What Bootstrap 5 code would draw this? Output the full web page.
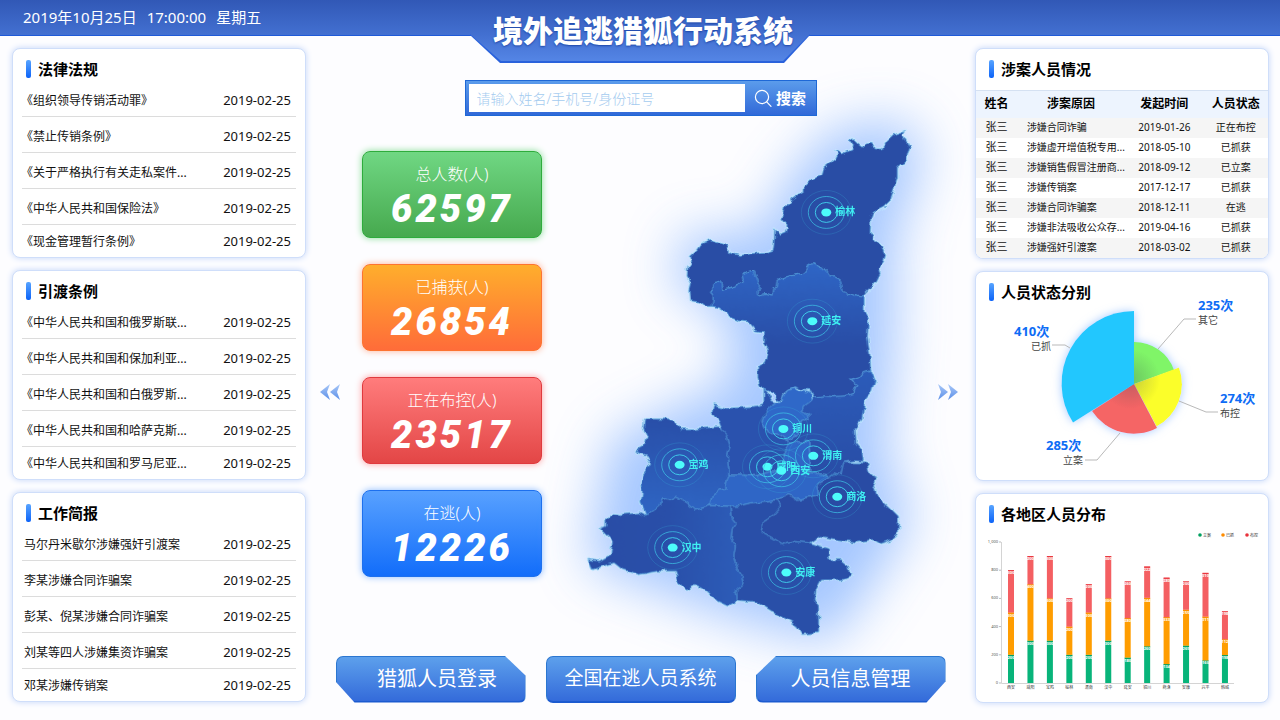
<!DOCTYPE html>
<html lang="zh-CN">
<head>
<meta charset="utf-8">
<meta name="viewport" content="width=device-width, initial-scale=1">
<title>境外追逃猎狐行动系统</title>
<link href="https://cdn.jsdelivr.net/npm/bootstrap@5.3.0/dist/css/bootstrap.min.css" rel="stylesheet">
<style>
  body { font-family: "Noto Sans", "Noto Sans CJK SC", sans-serif; font-size: 12px; color: #111; background: #fdfdff; min-height: 100vh; }
  svg text { font-family: "Noto Sans", "Noto Sans CJK SC", sans-serif; }

  /* top bar and its title tab share one 62px gradient */
  .topbar { height: 36px; z-index: 2; background: linear-gradient(#3158b6, #4370d1 35px) no-repeat; border-bottom: 1px solid #1f5ad8; font-size: 15px; color: #fff; }
  .clock { gap: 10px; margin-left: -1px; }
  .title-tab { width: 340px; height: 63px; padding: 9px 0 0 6px; background: #2a62dc; clip-path: polygon(0 0, 100% 0, 100% 35px, 314px 100%, 30px 100%, 0 35px); }
  .title-tab::before { content: ""; position: absolute; inset: 0 0 2px; z-index: -1; background: linear-gradient(#3158b6, #4370d1 35px, #5485e5); clip-path: polygon(0 0, 100% 0, 100% 34px, 313px 100%, 31px 100%, 0 34px); }
  .title-tab h1 { font-size: 30px; line-height: 44px; font-weight: 900; color: #fff; white-space: nowrap; text-shadow: 0 1px 2px #1c46a8; }

  .board { display: grid; grid-template-columns: 294px minmax(0, 1fr) 294px; padding: 12px 11px 16px 12px; }
  .side { display: flex; flex-direction: column; gap: 12px; }
  .panel { min-height: 210px; background: #fff; border: 1px solid #cfdefa; border-radius: 8px; box-shadow: 0 0 6px #c3d5f8; overflow: hidden; }
  .panel-title { display: flex; align-items: center; gap: 7px; height: 24px; margin: 8px 0 0 13px; font-size: 15px; font-weight: 700; color: #000; }
  .panel-title::before { content: ""; width: 5px; height: 18px; border-radius: 2px; background: linear-gradient(#58a4ff, #0c63f8); }

  .notices { margin: 0 9px; }
  .notices li { display: flex; justify-content: space-between; align-items: center; height: 36px; padding: 5px 5px 0 2px; border-bottom: 1px solid #dcdcdc; }
  .notices li:last-child { height: 32px; padding-top: 1px; border-bottom: 0; }
  .notices a { color: #111; text-decoration: none; }
  .notices .lawname { text-indent: -3px; }
  .notices time { font-size: 13px; }

  .cases { width: 100%; table-layout: fixed; margin-top: 9px; font-size: 10px; white-space: nowrap; }
  .cases th { height: 27px; padding: 0; background: #edf4fe; border-top: 1px solid #d5e1f2; font-size: 12px; line-height: 18px; text-align: center; color: #000; }
  .cases td { height: 20px; line-height: 18px; padding: 0 0 2px; text-align: center; }
  .cases td:first-child { font-size: 11px; }
  .cases td:nth-child(2) { text-align: left; padding-left: 10px; }
  .cases tbody tr:nth-child(odd) { background: #f5f5f5; }

  .search { width: 352px; height: 36px; margin-top: 32px; padding: 3px 0 3px 3px; z-index: 1; background: linear-gradient(#5b9ceb, #3169d8); border: 1px solid #1e68d6; }
  .search input { border: 0; border-radius: 0; background: #fff; font-size: 14px; font-weight: 300; padding: 0 8px; height: 28px; }
  .search input::placeholder { color: #a4cbef; opacity: 1; }
  .search button { width: 71px; flex: none; border: 0; background: none; color: #fff; font-size: 15px; font-weight: 700; white-space: nowrap; padding: 0; }

  .stage { padding: 0 16px 0 13px; }
  .pager { width: 22px; padding: 0; border: 0; background: none; margin-top: 12px; }
  .tallies { width: 180px; margin: 35px 0 0 21px; gap: 26px; }
  .tally { height: 87px; padding-top: 11px; border-radius: 8px; border: 1px solid; color: #fff; text-align: center; }
  .tally span { display: block; font-size: 16px; line-height: 22px; font-weight: 300; }
  .tally strong { display: block; font: italic 900 38px/48px Roboto, sans-serif; letter-spacing: 3px; }
  .tally-all { background: linear-gradient(#70d783, #46a94e); border-color: #2eac3c; box-shadow: 0 0 7px #83dc92; }
  .tally-caught { background: linear-gradient(#ffae2c, #ff6c39); border-color: #fd7431; box-shadow: 0 0 7px #ffb295; }
  .tally-watch { background: linear-gradient(#ff7c7c, #e34646); border-color: #e03a3e; box-shadow: 0 0 7px #ff9e9e; }
  .tally-free { background: linear-gradient(#58a1ff, #126dfa); border-color: #1d70ee; box-shadow: 0 0 7px #8dbcff; }
  .region-map { flex: 1 1 0; min-width: 0; height: 539px; overflow: visible; }

  .entries { gap: 20px; z-index: 1; }
  .entry { width: 190px; height: 47px; border: 1px solid #2b76d0; border-bottom: 2px solid #1c5bd0; border-radius: 7px; background: linear-gradient(#5da0ec, #346bda); color: #fff; font-size: 20px; padding: 0; white-space: nowrap; }
  .entry-left { clip-path: polygon(0 0, 169px 0, 100% 20px, 100% 100%, 19px 100%, 0 26px); padding-left: 13px; }
  .entry-mid { font-size: 19px; }
  .entry-right { clip-path: polygon(21px 0, 100% 0, 100% 26px, 171px 100%, 0 100%, 0 20px); }
</style>
</head>
<body>
<header class="topbar position-relative d-flex align-items-center px-4">
  <time class="clock d-flex"><span>2019年10月25日</span><span>17:00:00</span><span>星期五</span></time>
  <div class="title-tab position-absolute top-0 start-50 translate-middle-x text-center"><h1 class="m-0">境外追逃猎狐行动系统</h1></div>
</header>

<main class="board">
  <aside class="side">
    <section class="panel">
      <h2 class="panel-title">法律法规</h2>
      <ul class="notices list-unstyled">
        <li><a class="lawname" href="#">《组织领导传销活动罪》</a><time>2019-02-25</time></li>
        <li><a class="lawname" href="#">《禁止传销条例》</a><time>2019-02-25</time></li>
        <li><a class="lawname" href="#">《关于严格执行有关走私案件...</a><time>2019-02-25</time></li>
        <li><a class="lawname" href="#">《中华人民共和国保险法》</a><time>2019-02-25</time></li>
        <li><a class="lawname" href="#">《现金管理暂行条例》</a><time>2019-02-25</time></li>
      </ul>
    </section>
    <section class="panel">
      <h2 class="panel-title">引渡条例</h2>
      <ul class="notices list-unstyled">
        <li><a class="lawname" href="#">《中华人民共和国和俄罗斯联...</a><time>2019-02-25</time></li>
        <li><a class="lawname" href="#">《中华人民共和国和保加利亚...</a><time>2019-02-25</time></li>
        <li><a class="lawname" href="#">《中华人民共和国和白俄罗斯...</a><time>2019-02-25</time></li>
        <li><a class="lawname" href="#">《中华人民共和国和哈萨克斯...</a><time>2019-02-25</time></li>
        <li><a class="lawname" href="#">《中华人民共和国和罗马尼亚...</a><time>2019-02-25</time></li>
      </ul>
    </section>
    <section class="panel">
      <h2 class="panel-title">工作简报</h2>
      <ul class="notices list-unstyled">
        <li><a href="#">马尔丹米歇尔涉嫌强奸引渡案</a><time>2019-02-25</time></li>
        <li><a href="#">李某涉嫌合同诈骗案</a><time>2019-02-25</time></li>
        <li><a href="#">彭某、倪某涉嫌合同诈骗案</a><time>2019-02-25</time></li>
        <li><a href="#">刘某等四人涉嫌集资诈骗案</a><time>2019-02-25</time></li>
        <li><a href="#">邓某涉嫌传销案</a><time>2019-02-25</time></li>
      </ul>
    </section>
  </aside>

  <div class="d-flex flex-column align-items-center">
    <form class="search d-flex position-relative" role="search" onsubmit="return false">
      <input class="form-control" type="text" aria-label="搜索人员" placeholder="请输入姓名/手机号/身份证号">
      <button type="submit" class="d-flex align-items-center justify-content-center gap-1">
        <svg width="18" height="18" viewBox="0 0 18 18" fill="none" stroke="#fff" stroke-width="1.2" stroke-linecap="round"><circle cx="8" cy="8" r="6.6"/><path d="M12.7 12.9 17 17.3"/></svg>搜索
      </button>
    </form>

    <div class="stage d-flex w-100 flex-grow-1">
      <button class="pager align-self-center" type="button" aria-label="上一页">
        <svg width="22" height="18" viewBox="0 0 22 18"><defs><linearGradient id="arrowFill" x2="0" y2="1"><stop stop-color="#a9c8f8"/><stop offset="1" stop-color="#5b8fe8"/></linearGradient></defs><path fill="url(#arrowFill)" d="M11 1 1 9l10 8-3-8zM21 1 11 9l10 8-3-8z"/></svg>
      </button>
      <div class="tallies d-flex flex-column flex-shrink-0">
        <div class="tally tally-all"><span>总人数(人)</span><strong>62597</strong></div>
        <div class="tally tally-caught"><span>已捕获(人)</span><strong>26854</strong></div>
        <div class="tally tally-watch"><span>正在布控(人)</span><strong>23517</strong></div>
        <div class="tally tally-free"><span>在逃(人)</span><strong>12226</strong></div>
      </div>
      <svg class="region-map" viewBox="541 116 396 539" role="img" aria-label="陕西省地图">
        <defs>
          <filter id="halo" x="-50%" y="-30%" width="200%" height="160%"><feGaussianBlur stdDeviation="26"/></filter>
          <filter id="coast" x="-5%" y="-5%" width="110%" height="110%" color-interpolation-filters="sRGB">
            <feTurbulence type="fractalNoise" baseFrequency=".16" numOctaves="1" seed="4" result="n"/>
            <feDisplacementMap in="SourceGraphic" in2="n" scale="7" xChannelSelector="R" yChannelSelector="G"/>
          </filter>
          <linearGradient id="yanan" x2="0" y2="1"><stop stop-color="#2f66c6"/><stop offset=".6" stop-color="#294da6"/></linearGradient>
          <linearGradient id="baoji" x2="0" y2="1"><stop stop-color="#294fa9"/><stop offset="1" stop-color="#2f66c4"/></linearGradient>
          <linearGradient id="hanzhong"><stop stop-color="#294da6"/><stop offset=".5" stop-color="#294fa9"/><stop offset="1" stop-color="#2d5db9"/></linearGradient>
          <linearGradient id="weinan" x2="0" y2="1"><stop stop-color="#2c5cba"/><stop offset="1" stop-color="#294da6"/></linearGradient>
          <g id="shapes" transform="translate(570 360) scale(.3333)">
            <g transform="translate(270 -750)">
              <polygon fill="#294da5" points="735,60 728,72 738,90 750,112 742,130 740,152 725,160 712,172 712,200 700,240 692,268 670,290 640,305 632,325 630,368 650,395 668,415 676,435 668,460 655,475 660,490 650,510 630,535 612,555 600,560 578,553 560,558 548,540 540,508 528,500 508,500 500,480 480,470 458,460 440,472 430,488 400,495 380,498 350,510 348,530 338,535 335,555 315,550 292,555 290,545 297,530 292,510 280,480 262,483 245,492 248,510 225,527 205,533 185,537 180,515 168,512 160,520 160,540 150,545 158,560 155,588 135,588 120,575 88,572 85,540 90,520 80,500 82,465 92,450 90,438 110,420 125,400 150,390 180,400 200,405 208,428 240,435 290,428 320,425 338,420 342,385 343,355 358,375 378,368 382,345 365,325 375,290 395,265 432,240 430,228 455,205 485,195 492,170 525,145 532,132 525,120 545,130 575,118 580,105 567,85 580,88 605,110 618,100 635,98 645,115 665,115 680,90 700,72"/>
              <polygon fill="url(#yanan)" points="612,555 600,560 578,553 560,558 548,540 540,508 528,500 508,500 500,480 480,470 458,460 440,472 430,488 400,495 380,498 350,510 348,530 338,535 335,555 315,550 292,555 290,545 297,530 292,510 280,480 262,483 245,492 248,510 225,527 205,533 185,537 180,515 168,512 160,520 160,540 150,545 158,560 155,588 175,592 195,605 205,620 235,632 262,635 285,662 312,665 312,700 325,720 315,760 292,770 292,800 298,825 310,838 340,848 350,868 362,870 370,850 385,838 405,830 430,840 452,842 460,862 490,858 520,860 555,858 580,850 590,825 570,808 600,800 612,785 632,780 630,740 622,680 625,625 612,600"/>
            </g>
            <polygon fill="url(#weinan)" points="902,30 915,60 905,95 885,120 875,180 855,205 858,250 875,270 880,305 850,303 820,308 812,345 790,340 775,355 770,345 715,338 718,280 715,245 655,250 650,240 680,225 690,185 715,175 715,165 692,155 700,140 725,120 730,112 760,108 790,110 825,108 850,100 860,75 840,58 870,50 882,35"/>
            <polygon fill="#2a52ae" points="580,88 580,130 560,138 520,142 470,145 430,135 425,155 445,185 455,210 470,225 478,260 470,290 475,325 475,345 560,348 600,335 637,345 640,275 655,250 650,240 630,225 605,220 585,210 575,185 585,155 600,140 620,128 605,123 590,95"/>
            <polygon fill="#2f68c8" points="620,128 632,120 640,105 655,88 675,82 690,92 722,98 725,120 700,140 692,155 715,165 715,175 690,185 680,225 650,240 630,225 605,220 585,210 575,185 585,155 600,140"/>
            <polygon fill="#2f66c6" points="475,345 560,348 600,335 637,345 640,275 655,250 715,245 718,280 715,338 770,345 775,355 740,375 745,405 715,412 680,420 655,405 620,420 580,425 540,430 500,440 482,440 418,438 425,405 445,388 465,385 470,360"/>
            <polygon fill="url(#baoji)" points="445,200 400,205 370,210 335,210 310,185 285,178 250,178 222,178 218,205 230,230 222,255 195,270 200,280 225,285 240,310 218,345 210,370 215,400 210,425 220,450 225,470 240,460 270,435 275,415 300,422 320,410 350,430 375,452 418,438 425,405 445,388 465,385 470,360 475,345 475,325 470,290 478,260 470,225 455,210"/>
            <polygon fill="url(#hanzhong)" points="225,470 205,460 180,462 150,465 125,462 105,480 105,500 88,508 110,530 125,545 120,585 85,605 52,600 65,630 95,620 130,610 155,630 205,645 260,635 315,635 325,670 345,690 370,675 410,695 440,725 472,740 500,725 498,690 518,675 515,650 500,625 490,590 495,560 482,540 485,510 497,490 485,475 482,440 418,438 375,452 350,430 320,410 300,422 275,415 270,435 240,460"/>
            <polygon fill="#294fa8" points="482,440 500,440 540,430 580,425 620,420 632,440 605,470 580,485 572,515 600,530 635,552 665,545 720,550 775,568 775,600 810,600 835,620 845,650 820,660 750,662 735,690 732,715 745,740 745,820 695,825 680,800 620,765 560,728 500,722 498,690 518,675 515,650 500,625 490,590 495,560 482,540 485,510 497,490 485,475"/>
            <polygon fill="#294ba4" points="620,420 655,405 680,420 715,412 745,405 740,375 775,355 790,340 812,345 820,308 890,310 900,345 918,355 910,380 922,410 960,445 985,470 985,520 965,540 930,552 910,540 860,548 800,540 750,530 720,550 665,545 635,552 600,530 572,515 580,485 605,470 632,440"/>
          </g>
        </defs>
        <path filter="url(#halo)" fill="#8cb8ff" opacity=".78" d="M900 118 925 150 895 240 895 340 885 450 912 520 895 550 862 600 828 645 720 615 640 585 585 565 610 440 690 400 735 380 725 310 675 290 680 235 765 230 780 190 830 130Z"/>
        <g filter="url(#coast)">
          <use href="#shapes" stroke="#c5ecff" stroke-width="8" stroke-linejoin="round"/>
          <use href="#shapes" stroke="#4f9ad8" stroke-width="2.5" stroke-linejoin="round"/>
        </g>
        <g id="pins" fill="none" stroke="#3fc9e8"></g>
      </svg>
      <button class="pager align-self-center" type="button" aria-label="下一页">
        <svg width="22" height="18" viewBox="0 0 22 18"><path fill="url(#arrowFill)" d="M1 1l10 8L1 17l3-8zM11 1l10 8-10 8 3-8z"/></svg>
      </button>
    </div>

    <div class="entries d-flex position-relative">
      <button class="entry entry-left" type="button">猎狐人员登录</button>
      <button class="entry entry-mid" type="button">全国在逃人员系统</button>
      <button class="entry entry-right" type="button">人员信息管理</button>
    </div>
  </div>

  <aside class="side">
    <section class="panel">
      <h2 class="panel-title">涉案人员情况</h2>
      <table class="cases">
        <colgroup><col style="width:14%"><col style="width:37%"><col style="width:27%"><col style="width:22%"></colgroup>
        <thead><tr><th>姓名</th><th>涉案原因</th><th>发起时间</th><th>人员状态</th></tr></thead>
        <tbody>
          <tr><td>张三</td><td>涉嫌合同诈骗</td><td>2019-01-26</td><td>正在布控</td></tr>
          <tr><td>张三</td><td>涉嫌虚开增值税专用...</td><td>2018-05-10</td><td>已抓获</td></tr>
          <tr><td>张三</td><td>涉嫌销售假冒注册商...</td><td>2018-09-12</td><td>已立案</td></tr>
          <tr><td>张三</td><td>涉嫌传销案</td><td>2017-12-17</td><td>已抓获</td></tr>
          <tr><td>张三</td><td>涉嫌合同诈骗案</td><td>2018-12-11</td><td>在逃</td></tr>
          <tr><td>张三</td><td>涉嫌非法吸收公众存...</td><td>2019-04-16</td><td>已抓获</td></tr>
          <tr><td>张三</td><td>涉嫌强奸引渡案</td><td>2018-03-02</td><td>已抓获</td></tr>
        </tbody>
      </table>
    </section>
    <section class="panel position-relative">
      <h2 class="panel-title mb-0">人员状态分别</h2>
      <svg class="d-block w-100 overflow-visible" viewBox="976 303 292 176" role="img" aria-label="人员状态分别">
        <defs>
          <filter id="pieGlow" x="-30%" y="-30%" width="160%" height="160%"><feDropShadow dx="0" dy="0" stdDeviation="5" flood-color="#7fb2ff" flood-opacity=".7"/></filter>
          <radialGradient id="pieShade" gradientUnits="userSpaceOnUse" cx="1130" cy="378" r="30"><stop stop-color="#345" stop-opacity=".28"/><stop offset="1" stop-color="#345" stop-opacity="0"/></radialGradient>
        </defs>
        <g filter="url(#pieGlow)">
          <path fill="#80f567" d="M1134 383V341A42 42 0 0 1 1174 369Z"/>
          <path fill="#fbfe2a" d="M1134 383 1179 366.500A48 48 0 0 1 1156.500 425.500Z"/>
          <path fill="#f56565" d="M1134 383 1157 427A50 50 0 0 1 1092 410Z"/>
          <circle cx="1134" cy="383" r="40" fill="url(#pieShade)"/>
          <path fill="#20c7fe" d="M1134 383 1073 421.500A72.500 72.500 0 0 1 1134 310Z"/>
        </g>
        <g fill="none" stroke="#b9b9b9"><path d="M1158 348 1184 318H1196"/><path d="M1052 344H1065L1070 347"/><path d="M1179 400 1206 411H1218"/><path d="M1120 432 1097 459H1085"/></g>
        <g font-size="13" font-weight="700" fill="#0d6cf5"><text x="1198" y="309">235次</text><text x="1014" y="335">410次</text><text x="1220" y="402">274次</text><text x="1046" y="449">285次</text></g>
        <g font-size="10" fill="#444"><text x="1198" y="323">其它</text><text x="1031" y="349">已抓</text><text x="1220" y="416">布控</text><text x="1063" y="463">立案</text></g>
      </svg>
    </section>
    <section class="panel">
      <h2 class="panel-title mb-0">各地区人员分布</h2>
      <svg id="bars" class="d-block w-100" viewBox="976 525 292 176" role="img" aria-label="各地区人员分布"></svg>
    </section>
  </aside>
</main>

<script src="https://cdn.jsdelivr.net/npm/bootstrap@5.3.0/dist/js/bootstrap.bundle.min.js"></script>
<script>
  const cities = [['榆林',826,212],['延安',812,321],['铜川',783,429],['渭南',813,456],['咸阳',767,467],['西安',781,471],['宝鸡',679,465],['商洛',837,497],['汉中',672,548],['安康',786,573]];
  document.getElementById('pins').innerHTML = cities.map(([name, x, y]) =>
    `<ellipse cx="${x}" cy="${y}" rx="11" ry="10"/><ellipse cx="${x}" cy="${y}" rx="18" ry="16" opacity=".7"/><ellipse cx="${x}" cy="${y}" rx="25" ry="22" opacity=".2"/>
     <ellipse cx="${x}" cy="${y}" rx="5" ry="4" fill="#4dfcfb" stroke="none"/><text x="${x + 9}" y="${y + 3}" font-size="10" font-weight="700" fill="#3ff0f2" stroke="none">${name}</text>`).join('');

  // per city: filed, caught, under watch
  const data = [['西安',200,300,300],['咸阳',300,400,200],['宝鸡',300,300,300],['榆林',200,200,200],['渭南',200,300,200],['汉中',300,300,300],['延安',180,280,260],['铜川',260,344,222],['商洛',134,333,280],['安康',265,255,200],['兴平',160,311,310],['韩城',198,112,198]];
  const colors = ['#08b47a', '#ff9d00', '#f45f62'], tops = ['#00a060', '#ff8c00', '#e8323c'];
  const base = 682, unit = 0.141;
  let out = '<path d="M1001.500 541V682.500H1234" fill="none" stroke="#d4d4d4"/>';
  for (let v = 0; v <= 1000; v += 200)
    out += `<path d="M999 ${base - v * unit}h2" stroke="#bbb"/><text x="998" y="${base - v * unit + 1}" font-size="4" text-anchor="end" fill="#555">${v.toLocaleString('en')}</text>`;
  data.forEach(([name, ...parts], i) => {
    const x = 1008 + i * 19.45; let y = base;
    parts.forEach((n, k) => {
      const h = n * unit; y -= h;
      out += `<rect x="${x}" y="${y}" width="6" height="${h}" fill="${colors[k]}"/><rect x="${x}" y="${y}" width="6" height="1" fill="${tops[k]}"/><text x="${x + 3}" y="${y + 4}" font-size="4" font-weight="700" text-anchor="middle" fill="#fff">${n}</text>`;
    });
    out += `<text x="${x + 3}" y="688" font-size="4" text-anchor="middle" fill="#333">${name}</text>`;
  });
  [['立案',1200],['已抓',1223],['布控',1247]].forEach(([name, x], k) => {
    out += `<circle cx="${x}" cy="534" r="1.800" fill="${tops[k]}"/><text x="${x + 3}" y="536" font-size="4" fill="#333">${name}</text>`;
  });
  document.getElementById('bars').innerHTML = out;
</script>
</body>
</html>
